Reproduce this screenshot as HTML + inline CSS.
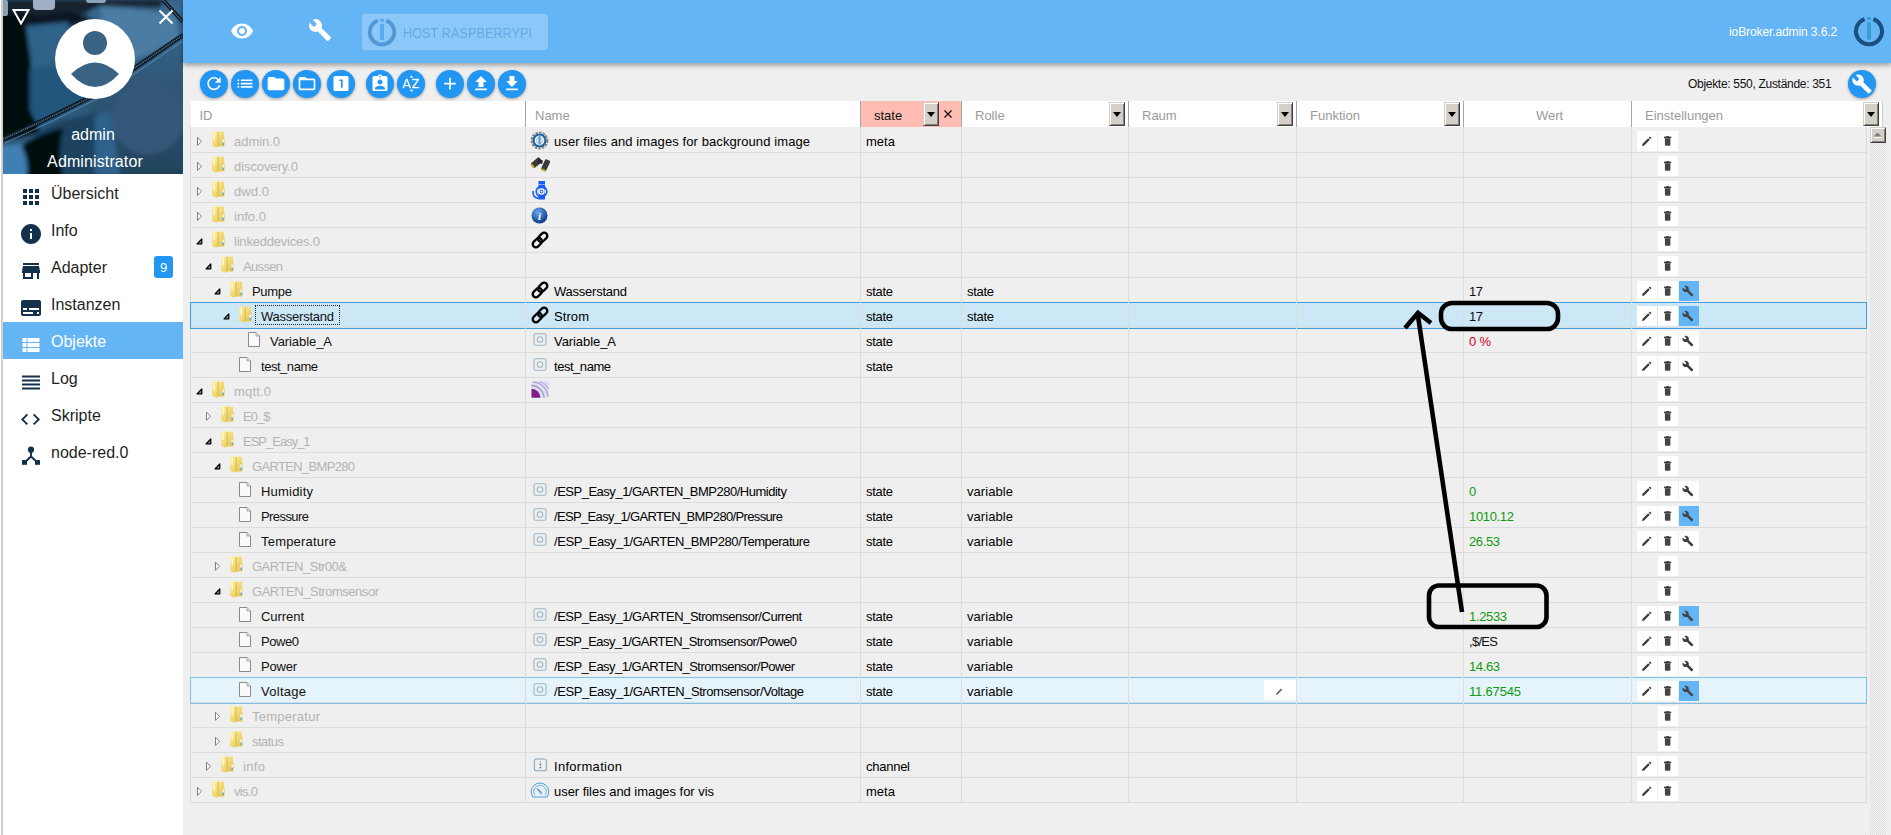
<!DOCTYPE html><html><head><meta charset="utf-8"><style>
*{box-sizing:border-box}
html,body{margin:0;padding:0}
body{width:1891px;height:835px;overflow:hidden;background:#efefef;font-family:"Liberation Sans",sans-serif;position:relative;color:#000}
.a{position:absolute}
.t{position:absolute;white-space:nowrap;font-size:13px;line-height:16px;margin-top:1px}
.mi{position:absolute;left:51px;font-size:16px;line-height:20px;color:#1f1f1f;white-space:nowrap}
.fab{position:absolute;width:28px;height:28px;border-radius:50%;background:#2196f3;box-shadow:0 1px 3px rgba(0,0,0,.35)}
.fab svg{position:absolute;left:0;top:0}
.hl{position:absolute;top:101px;height:26px;width:1px;background:#a6a6a6}
.ht{position:absolute;top:108px;font-size:13px;line-height:16px;color:#9a9a9a;white-space:nowrap}
.dd{position:absolute;top:102px;width:16px;height:24px;background:#d4d0c8;border-top:1px solid #d4d0c8;border-left:1px solid #d4d0c8;border-right:1px solid #404040;border-bottom:1px solid #404040;box-shadow:inset 1px 1px #fff,inset -1px -1px #808080}
.dd:after{content:"";position:absolute;left:2.5px;top:9px;border-left:4.5px solid transparent;border-right:4.5px solid transparent;border-top:5px solid #000}
.rl{position:absolute;left:191px;width:1675px;height:1px;background:#dcdcdc}
.vl{position:absolute;top:127px;width:1px;height:675px;background:#dcdcdc}
.btn{position:absolute;width:20px;height:20px;background:#fff}
.btn svg{position:absolute;left:0;top:0}
.g{color:#aaa}
</style></head><body>
<div class="a" style="left:0;top:0;width:183px;height:835px;background:#fff"></div>
<div class="a" style="left:1px;top:0;width:2px;height:835px;background:#d4d0c8"></div>
<svg class="a" style="left:3px;top:0" width="180" height="174" viewBox="3 0 180 174">
<defs>
<filter id="bl" x="-10%" y="-10%" width="120%" height="120%"><feGaussianBlur stdDeviation="2.2"/></filter>
<filter id="bl2" x="-10%" y="-10%" width="120%" height="120%"><feGaussianBlur stdDeviation="0.6"/></filter>
<linearGradient id="hbr" x1="0" y1="0" x2="0" y2="1"><stop offset="0" stop-color="#3b6a90"/><stop offset="1" stop-color="#22425c"/></linearGradient>
</defs>
<rect x="0" y="0" width="190" height="180" fill="#305a7c"/>
<g filter="url(#bl)">
<rect x="90" y="0" width="100" height="180" fill="url(#hbr)"/>
<path d="M100 5 L175 15 L180 40 L130 62 L105 40Z" fill="#4b7ca3"/>
<circle cx="148" cy="118" r="36" fill="#34597a"/>
<path d="M90 175 L90 120 L110 110 L120 175Z" fill="#2d628c"/>
<path d="M0 0 L165 0 L160 8 L100 6 L60 24 L0 22Z" fill="#13212f"/>
<path d="M0 12 L58 18 L38 30 L30 70 L32 105 L40 132 L0 142Z" fill="#02070c"/>
<path d="M20 18 L70 12 L95 20 L60 28 L25 30Z" fill="#0a1420"/>
<path d="M26 26 L68 22 L70 62 L32 68Z" fill="#2f6289"/>
<path d="M30 70 L70 62 L95 80 L95 95 L40 130 L30 110Z" fill="#24577d"/>
<path d="M35 135 Q55 120 75 118 L95 112 L95 180 L60 180 Q50 150 35 140Z" fill="#1c4361"/>
<path d="M22 146 Q42 132 64 128 Q56 150 64 180 L24 180Z" fill="#030a10"/>
<path d="M0 146 L20 144 Q30 160 26 180 L0 180Z" fill="#3f7fb3"/>
</g>
<g filter="url(#bl2)">
<rect x="33" y="-4" width="22" height="14" rx="4" fill="#9fb0c4"/>
<rect x="86" y="-6" width="20" height="9" rx="3" fill="#8fa3b8"/>
<rect x="0" y="0" width="8" height="16" rx="2" fill="#8aa0b6"/>
</g>
<path d="M3 139 Q50 118 95 95 L183 35" fill="none" stroke="#0b1a26" stroke-width="4.5"/>
<path d="M3 139 Q50 118 95 95 L183 35" fill="none" stroke="#5f7f98" stroke-width="1.6" stroke-dasharray="1 1"/>
<path d="M5 143 Q50 123 97 99 L183 41" fill="none" stroke="#6f9dc4" stroke-width="1" opacity="0.7"/>
<path d="M163 0 L183 22" fill="none" stroke="#0d1b28" stroke-width="4"/>
<path d="M163 0 L183 22" fill="none" stroke="#5f7f98" stroke-width="1.4" stroke-dasharray="1 1"/>
</svg>
<svg class="a" style="left:11px;top:8px" width="20" height="18"><path d="M2.5 2 H17.5 L10 15.5Z" fill="none" stroke="#fff" stroke-width="2" stroke-linejoin="miter"/></svg>
<svg class="a" style="left:157px;top:8px" width="18" height="18"><path d="M2.5 2.5 L15.5 15.5 M15.5 2.5 L2.5 15.5" stroke="#fff" stroke-width="2"/></svg>
<svg class="a" style="left:55px;top:19px" width="80" height="80" viewBox="0 0 80 80">
<circle cx="40" cy="40" r="40" fill="#fff"/>
<circle cx="40" cy="24" r="12" fill="#3a6283"/>
<path d="M16 55 Q40 32 64 55 Q40 81 16 55Z" fill="#3a6283"/>
</svg>
<div class="a" style="left:3px;top:125px;width:180px;text-align:center;color:#fff;font-size:16px;line-height:20px">admin</div>
<div class="a" style="left:5px;top:152px;width:180px;text-align:center;color:#fff;font-size:16px;line-height:20px;letter-spacing:0.12px">Administrator</div>
<div class="mi" style="top:184px;color:#1f1f1f">Übersicht</div>
<div class="mi" style="top:221px;color:#1f1f1f">Info</div>
<div class="mi" style="top:258px;color:#1f1f1f">Adapter</div>
<div class="mi" style="top:295px;color:#1f1f1f">Instanzen</div>
<div class="a" style="left:3px;top:322px;width:180px;height:37px;background:#64b5f6"></div>
<div class="mi" style="top:332px;color:#fff">Objekte</div>
<div class="mi" style="top:369px;color:#1f1f1f">Log</div>
<div class="mi" style="top:406px;color:#1f1f1f">Skripte</div>
<div class="mi" style="top:443px;color:#1f1f1f">node-red.0</div>
<svg class="a" style="left:0;top:0" width="60" height="480"><g transform="translate(19 185) scale(1)"><path fill="#13304c" d="M4 8h4V4H4v4zm6 12h4v-4h-4v4zm-6 0h4v-4H4v4zm0-6h4v-4H4v4zm6 0h4v-4h-4v4zm6-10v4h4V4h-4zm-6 4h4V4h-4v4zm6 6h4v-4h-4v4zm0 6h4v-4h-4v4z"/></g><g transform="translate(19 222) scale(1)"><path fill="#13304c" d="M12 2C6.48 2 2 6.48 2 12s4.48 10 10 10 10-4.48 10-10S17.52 2 12 2zm1 15h-2v-6h2v6zm0-8h-2V7h2v2z"/></g><g transform="translate(19 259) scale(1)"><path fill="#13304c" d="M20 4H4v2h16V4zm1 10v-2l-1-5H4l-1 5v2h1v6h10v-6h4v6h2v-6h1zm-9 4H6v-4h6v4z"/></g><g transform="translate(19 296) scale(1)"><path fill="#13304c" d="M20 4H4c-1.1 0-2 .9-2 2v12c0 1.1.9 2 2 2h16c1.1 0 2-.9 2-2V6c0-1.1-.9-2-2-2zM4 12h4v2H4v-2zm10 6H4v-2h10v2zm6 0h-2v-2h2v2zm0-4H10v-2h10v2z"/></g><g transform="translate(18.5 333) scale(1)"><path fill="#fff" d="M4 14h4v-4H4v4zm0 5h4v-4H4v4zM4 9h4V5H4v4zm5 5h12v-4H9v4zm0 5h12v-4H9v4zM9 5v4h12V5H9z"/></g><g transform="translate(19 370.5) scale(1)"><path fill="#13304c" d="M3 15h18v-2H3v2zm0 4h18v-2H3v2zm0-8h18V9H3v2zm0-6v2h18V5H3z"/></g><g transform="translate(19.1 408) scale(0.95)"><path fill="#13304c" d="M9.4 16.6L4.8 12l4.6-4.6L8 6l-6 6 6 6 1.4-1.4zm5.2 0l4.6-4.6-4.6-4.6L16 6l6 6-6 6-1.4-1.4z"/></g><circle cx="31" cy="449.7" r="3.1" fill="#13304c"/><path d="M31 451 L31 456.5 L25 462 M31 456.5 L37 462" fill="none" stroke="#13304c" stroke-width="1.9"/><rect x="22" y="460" width="5" height="4.8" fill="#13304c"/><rect x="35" y="460" width="5" height="4.8" fill="#13304c"/></svg>
<div class="a" style="left:154px;top:256px;width:19px;height:22px;border-radius:3px;background:#2196f3;color:#fff;font-size:13px;line-height:24px;text-align:center">9</div>
<div class="a" style="left:183px;top:0;width:1708px;height:63px;background:#64b5f6;box-shadow:0 2px 5px rgba(0,0,0,.38)"></div>
<svg class="a" style="left:230px;top:19px" width="24" height="24" viewBox="0 0 24 24"><path fill="#fff" d="M12 4.5C7 4.5 2.73 7.61 1 12c1.73 4.39 6 7.5 11 7.5s9.27-3.11 11-7.5c-1.73-4.39-6-7.5-11-7.5zM12 17c-2.76 0-5-2.24-5-5s2.24-5 5-5 5 2.24 5 5-2.24 5-5 5zm0-8c-1.66 0-3 1.34-3 3s1.34 3 3 3 3-1.34 3-3-1.34-3-3-3z"/></svg>
<svg class="a" style="left:307.5px;top:18px" width="24" height="24" viewBox="0 0 24 24"><path fill="#fff" d="M22.7 19l-9.1-9.1c.9-2.3.4-5-1.5-6.9-2-2-5-2.4-7.4-1.3L9 6 6 9 1.6 4.7C.4 7.1.9 10.1 2.9 12.1c1.9 1.9 4.6 2.4 6.9 1.5l9.1 9.1c.4.4 1 .4 1.4 0l2.3-2.3c.5-.4.5-1.1.1-1.4z"/></svg>
<div class="a" style="left:362px;top:14px;width:186px;height:36px;border-radius:3px;background:rgba(255,255,255,.25)"></div>
<svg class="a" style="left:0;top:0" width="1891" height="60"><path d="M386.20 20.69 A12.25 12.25 0 1 1 377.80 20.69" fill="none" stroke="#5298d6" stroke-width="3.9"/><rect x="380.0" y="24.1" width="4" height="15.799999999999997" fill="#5aacec"/><rect x="380.0" y="18.7" width="4" height="3.1000000000000014" fill="#5aacec"/></svg>
<div class="a" style="left:402.5px;top:25.2px;font-size:14px;line-height:16px;color:#64abe6;white-space:nowrap;transform:scaleX(0.91);transform-origin:0 0">HOST RASPBERRYPI</div>
<div class="a" style="left:1729px;top:24px;font-size:12px;letter-spacing:-0.1px;line-height:16px;color:#fff;white-space:nowrap">ioBroker.admin 3.6.2</div>
<svg class="a" style="left:0;top:0" width="1891" height="60"><path d="M1873.40 19.07 A13 13 0 1 1 1864.60 19.07" fill="none" stroke="#1a4f80" stroke-width="4"/><rect x="1867.0" y="22.1" width="4" height="17.5" fill="#3a9fd0"/><rect x="1867.0" y="17" width="4" height="3" fill="#3a9fd0"/></svg>
<div class="fab" style="left:200px;top:70px"><svg width="28" height="28"><g transform="translate(4 3.6) scale(0.8333)"><path fill="#fff" d="M17.65 6.35C16.2 4.9 14.21 4 12 4c-4.42 0-7.99 3.58-7.99 8s3.57 8 7.99 8c3.73 0 6.84-2.55 7.73-6h-2.08c-.82 2.33-3.04 4-5.65 4-3.31 0-6-2.69-6-6s2.69-6 6-6c1.66 0 3.14.69 4.22 1.78L13 11h7V4l-2.35 2.35z"/></g></svg></div>
<div class="fab" style="left:231px;top:70px"><svg width="28" height="28"><g transform="translate(4 3.6) scale(0.8333)"><path fill="#fff" d="M3 13h2v-2H3v2zm0 4h2v-2H3v2zm0-8h2V7H3v2zm4 4h14v-2H7v2zm0 4h14v-2H7v2zM7 7v2h14V7H7z"/></g></svg></div>
<div class="fab" style="left:262px;top:70px"><svg width="28" height="28"><g transform="translate(4 3.6) scale(0.8333)"><path fill="#fff" d="M10 4H4c-1.1 0-1.99.9-1.99 2L2 18c0 1.1.9 2 2 2h16c1.1 0 2-.9 2-2V8c0-1.1-.9-2-2-2h-8l-2-2z"/></g></svg></div>
<div class="fab" style="left:293px;top:70px"><svg width="28" height="28"><g transform="translate(4 3.6) scale(0.8333)"><path fill="#fff" d="M20 6h-8l-2-2H4c-1.1 0-1.99.9-1.99 2L2 18c0 1.1.9 2 2 2h16c1.1 0 2-.9 2-2V8c0-1.1-.9-2-2-2zm0 12H4V8h16v10z"/></g></svg></div>
<div class="fab" style="left:327px;top:70px"><svg width="28" height="28"><g transform="translate(4 3.6) scale(0.8333)"><path fill="#fff" d="M19 3H5c-1.1 0-2 .9-2 2v14c0 1.1.9 2 2 2h14c1.1 0 2-.9 2-2V5c0-1.1-.9-2-2-2zm-5 14h-2V9h-2V7h4v10z"/></g></svg></div>
<div class="fab" style="left:366px;top:70px"><svg width="28" height="28"><g transform="translate(4 3.6) scale(0.8333)"><path fill="#fff" d="M19 3h-4.18C14.4 1.84 13.3 1 12 1c-1.3 0-2.4.84-2.82 2H5c-1.1 0-2 .9-2 2v14c0 1.1.9 2 2 2h14c1.1 0 2-.9 2-2V5c0-1.1-.9-2-2-2zm-7 0c.55 0 1 .45 1 1s-.45 1-1 1-1-.45-1-1 .45-1 1-1zm0 4c1.66 0 3 1.34 3 3s-1.34 3-3 3-3-1.34-3-3 1.34-3 3-3zm6 12H6v-1.4c0-2 4-3.1 6-3.1s6 1.1 6 3.1V19z"/></g></svg></div>
<div class="fab" style="left:397px;top:70px"><svg width="28" height="28"><g transform="translate(4 3.6) scale(0.8333)"><path fill="#fff" d="M14.94 4.66h-4.72l2.36-2.36zm-4.69 14.71h4.66l-2.33 2.33zM6.1 6.27L1.6 17.73h1.84l.92-2.45h5.11l.92 2.45h1.84L7.74 6.27H6.1zm-1.13 7.37l1.94-5.18 1.94 5.18H4.97zm10.76 2.5h6.12v1.59h-8.53v-1.29l5.92-8.56h-5.88v-1.6h8.3v1.26l-5.93 8.6z"/></g></svg></div>
<div class="fab" style="left:436px;top:70px"><svg width="28" height="28"><g transform="translate(4 3.6) scale(0.8333)"><path fill="#fff" d="M19 13h-6v6h-2v-6H5v-2h6V5h2v6h6v2z"/></g></svg></div>
<div class="fab" style="left:467px;top:70px"><svg width="28" height="28"><g transform="translate(4 3.6) scale(0.8333)"><path fill="#fff" d="M9 16h6v-6h4l-7-7-7 7h4zm-4 2h14v2H5z"/></g></svg></div>
<div class="fab" style="left:498px;top:70px"><svg width="28" height="28"><g transform="translate(4 3.6) scale(0.8333)"><path fill="#fff" d="M19 9h-4V3H9v6H5l7 7 7-7zM5 18v2h14v-2H5z"/></g></svg></div>
<div class="a" style="left:1688px;top:76px;font-size:12px;letter-spacing:-0.3px;line-height:16px;color:#111;white-space:nowrap">Objekte: 550, Zustände: 351</div>
<div class="fab" style="left:1848px;top:70px"><svg width="28" height="28" viewBox="-4 -4 32 32"><path fill="#fff" d="M22.7 19l-9.1-9.1c.9-2.3.4-5-1.5-6.9-2-2-5-2.4-7.4-1.3L9 6 6 9 1.6 4.7C.4 7.1.9 10.1 2.9 12.1c1.9 1.9 4.6 2.4 6.9 1.5l9.1 9.1c.4.4 1 .4 1.4 0l2.3-2.3c.5-.4.5-1.1.1-1.4z"/></svg></div>
<div class="a" style="left:191px;top:101px;width:1692px;height:26px;background:#fff"></div>
<div class="a" style="left:861px;top:101px;width:100px;height:26px;background:#ffbcb2"></div>
<div class="hl" style="left:525px"></div>
<div class="hl" style="left:860px"></div>
<div class="hl" style="left:961px"></div>
<div class="hl" style="left:1128px"></div>
<div class="hl" style="left:1296px"></div>
<div class="hl" style="left:1463px"></div>
<div class="hl" style="left:1631px"></div>
<div class="hl" style="left:1882px;background:#d0d0d0"></div>
<div class="ht" style="left:199.5px">ID</div>
<div class="ht" style="left:535px">Name</div>
<div class="ht" style="left:975px">Rolle</div>
<div class="ht" style="left:1142px">Raum</div>
<div class="ht" style="left:1310px">Funktion</div>
<div class="ht" style="left:1645px">Einstellungen</div>
<div class="ht" style="left:1536px">Wert</div>
<div class="ht" style="left:874px;color:#111">state</div>
<div class="dd" style="left:923px"></div>
<div class="dd" style="left:1109px"></div>
<div class="dd" style="left:1277px"></div>
<div class="dd" style="left:1444px"></div>
<div class="dd" style="left:1863px"></div>
<svg class="a" style="left:943px;top:109px" width="10" height="10"><path d="M1.5 1.5 L8.5 8.5 M8.5 1.5 L1.5 8.5" stroke="#111" stroke-width="1.3"/></svg>
<div class="a" style="left:1870px;top:143px;width:16px;height:692px;background-color:#f4f4f4;background-image:repeating-conic-gradient(#d9d9d9 0 25%, #f7f7f7 0 50%);background-size:2px 2px"></div>
<div class="a" style="left:1870px;top:127px;height:16px;width:16px;background:#d4d0c8;border-top:1px solid #d4d0c8;border-left:1px solid #d4d0c8;border-right:1px solid #404040;border-bottom:1px solid #404040;box-shadow:inset 1px 1px #fff,inset -1px -1px #808080"><svg width="13" height="13" style="position:absolute;left:0;top:0"><path d="M2.5 8.5 L6.5 4.5 L10.5 8.5Z" fill="#808080"/><rect x="2.5" y="9" width="8" height="1" fill="#fff"/></svg></div>
<div class="a" style="left:190px;top:127px;width:1px;height:676px;background:#dcdcdc"></div>
<div class="a" style="left:1866px;top:127px;width:1px;height:676px;background:#dcdcdc"></div>
<div class="rl" style="top:152px"></div>
<div class="rl" style="top:177px"></div>
<div class="rl" style="top:202px"></div>
<div class="rl" style="top:227px"></div>
<div class="rl" style="top:252px"></div>
<div class="rl" style="top:277px"></div>
<div class="rl" style="top:302px"></div>
<div class="a" style="left:190px;top:302px;width:1677px;height:27px;background:#cce8f6;border:1px solid #3d9fe0"></div>
<div class="rl" style="top:327px"></div>
<div class="rl" style="top:352px"></div>
<div class="rl" style="top:377px"></div>
<div class="rl" style="top:402px"></div>
<div class="rl" style="top:427px"></div>
<div class="rl" style="top:452px"></div>
<div class="rl" style="top:477px"></div>
<div class="rl" style="top:502px"></div>
<div class="rl" style="top:527px"></div>
<div class="rl" style="top:552px"></div>
<div class="rl" style="top:577px"></div>
<div class="rl" style="top:602px"></div>
<div class="rl" style="top:627px"></div>
<div class="rl" style="top:652px"></div>
<div class="rl" style="top:677px"></div>
<div class="a" style="left:190px;top:677px;width:1677px;height:27px;background:#e5f3fb;border:1px solid #7fc0ea"></div>
<div class="rl" style="top:702px"></div>
<div class="rl" style="top:727px"></div>
<div class="rl" style="top:752px"></div>
<div class="rl" style="top:777px"></div>
<div class="rl" style="top:802px"></div>
<div class="vl" style="left:525px;height:675px"></div>
<div class="vl" style="left:860px;height:675px"></div>
<div class="vl" style="left:961px;height:675px"></div>
<div class="vl" style="left:1128px;height:675px"></div>
<div class="vl" style="left:1296px;height:675px"></div>
<div class="vl" style="left:1463px;height:675px"></div>
<div class="vl" style="left:1631px;height:675px"></div>
<svg class="a" style="left:196px;top:136px" width="8" height="11"><path d="M1.5 1.2 L5.5 5.3 L1.5 9.4Z" fill="#fff" stroke="#808080" stroke-width="1"/></svg>
<svg class="a" style="left:211px;top:131px" width="14" height="17" viewBox="0 0 14 17"><defs><linearGradient id="fg" x1="0" y1="0" x2="1" y2="1"><stop offset="0" stop-color="#fff3a8"/><stop offset="1" stop-color="#e2c04a"/></linearGradient></defs><path d="M1 1.5 Q1 0.5 2 0.5 H12 Q13 0.5 13 1.5 V6 H13.5 V14.5 Q13.5 15.5 12.5 15.5 H7 Q6.5 16.5 5 16.5 Q3.5 16.5 3 15.5 H2 Q1 15.5 1 14.5Z" fill="url(#fg)"/><rect x="6.5" y="1" width="1.3" height="14.5" fill="#d8b440" opacity="0.7"/><rect x="2.5" y="2" width="1.5" height="7" fill="#fffce0" opacity="0.8"/><rect x="11.5" y="8.5" width="1.3" height="5" fill="#fff"/><rect x="11.5" y="11.5" width="1.3" height="2.5" fill="#3aa0d8"/></svg>
<div class="t" style="left:234px;top:133px;color:#b3b3b3;letter-spacing:-0.042px">admin.0</div>
<svg class="a" style="left:530px;top:131px" width="19" height="19" viewBox="0 0 19 19"><circle cx="9.5" cy="9.5" r="8" fill="none" stroke="#888" stroke-width="2" stroke-dasharray="2.5 1.2"/><circle cx="9.5" cy="9.5" r="6" fill="none" stroke="#1d5f9a" stroke-width="2.2"/><circle cx="9.5" cy="9.5" r="3" fill="none" stroke="#bbb" stroke-width="1"/><rect x="8.5" y="3.5" width="2" height="10" fill="#3aa0e0"/></svg>
<div class="t" style="left:554px;top:133px;letter-spacing:0.093px">user files and images for background image</div>
<div class="t" style="left:866px;top:133px;letter-spacing:0.031px">meta</div>
<div class="btn" style="left:1637px;top:131px"><svg width="20" height="20"><path d="M5 15 L5.6 12.8 L11.2 7.2 L12.8 8.8 L7.2 14.4Z" fill="#3c3c3c"/><path d="M11.8 6.6 L12.9 5.5 L14.5 7.1 L13.4 8.2Z" fill="#3c3c3c"/></svg></div>
<div class="btn" style="left:1658px;top:131px"><svg width="20" height="20"><rect x="6" y="5.6" width="7.2" height="1.6" fill="#3c3c3c"/><rect x="8.4" y="5" width="2.4" height="1" fill="#3c3c3c"/><path d="M6.9 7.2 H12.4 V13.8 Q12.4 14.8 11.4 14.8 H7.9 Q6.9 14.8 6.9 13.8Z" fill="#444"/></svg></div>
<svg class="a" style="left:196px;top:161px" width="8" height="11"><path d="M1.5 1.2 L5.5 5.3 L1.5 9.4Z" fill="#fff" stroke="#808080" stroke-width="1"/></svg>
<svg class="a" style="left:211px;top:156px" width="14" height="17" viewBox="0 0 14 17"><defs><linearGradient id="fg" x1="0" y1="0" x2="1" y2="1"><stop offset="0" stop-color="#fff3a8"/><stop offset="1" stop-color="#e2c04a"/></linearGradient></defs><path d="M1 1.5 Q1 0.5 2 0.5 H12 Q13 0.5 13 1.5 V6 H13.5 V14.5 Q13.5 15.5 12.5 15.5 H7 Q6.5 16.5 5 16.5 Q3.5 16.5 3 15.5 H2 Q1 15.5 1 14.5Z" fill="url(#fg)"/><rect x="6.5" y="1" width="1.3" height="14.5" fill="#d8b440" opacity="0.7"/><rect x="2.5" y="2" width="1.5" height="7" fill="#fffce0" opacity="0.8"/><rect x="11.5" y="8.5" width="1.3" height="5" fill="#fff"/><rect x="11.5" y="11.5" width="1.3" height="2.5" fill="#3aa0d8"/></svg>
<div class="t" style="left:234px;top:158px;color:#b3b3b3;letter-spacing:-0.08px">discovery.0</div>
<svg class="a" style="left:530px;top:156px" width="20" height="18" viewBox="0 0 20 18"><g transform="translate(6 7) rotate(-40)"><rect x="-5" y="-3" width="11" height="6" rx="1.5" fill="#3a3a3a"/><rect x="-5.5" y="-2.3" width="2" height="4.6" fill="#c9b020"/></g><g transform="translate(15.5 9.5) rotate(-65)"><rect x="-5.5" y="-2.8" width="11.5" height="5.6" rx="1.5" fill="#3a3a3a"/><rect x="-6" y="-2.2" width="2" height="4.4" fill="#c9b020"/></g><path d="M8 3 L13 4.5 L12 8 L8 7Z" fill="#2a2a2a"/></svg>
<div class="btn" style="left:1658px;top:156px"><svg width="20" height="20"><rect x="6" y="5.6" width="7.2" height="1.6" fill="#3c3c3c"/><rect x="8.4" y="5" width="2.4" height="1" fill="#3c3c3c"/><path d="M6.9 7.2 H12.4 V13.8 Q12.4 14.8 11.4 14.8 H7.9 Q6.9 14.8 6.9 13.8Z" fill="#444"/></svg></div>
<svg class="a" style="left:196px;top:186px" width="8" height="11"><path d="M1.5 1.2 L5.5 5.3 L1.5 9.4Z" fill="#fff" stroke="#808080" stroke-width="1"/></svg>
<svg class="a" style="left:211px;top:181px" width="14" height="17" viewBox="0 0 14 17"><defs><linearGradient id="fg" x1="0" y1="0" x2="1" y2="1"><stop offset="0" stop-color="#fff3a8"/><stop offset="1" stop-color="#e2c04a"/></linearGradient></defs><path d="M1 1.5 Q1 0.5 2 0.5 H12 Q13 0.5 13 1.5 V6 H13.5 V14.5 Q13.5 15.5 12.5 15.5 H7 Q6.5 16.5 5 16.5 Q3.5 16.5 3 15.5 H2 Q1 15.5 1 14.5Z" fill="url(#fg)"/><rect x="6.5" y="1" width="1.3" height="14.5" fill="#d8b440" opacity="0.7"/><rect x="2.5" y="2" width="1.5" height="7" fill="#fffce0" opacity="0.8"/><rect x="11.5" y="8.5" width="1.3" height="5" fill="#fff"/><rect x="11.5" y="11.5" width="1.3" height="2.5" fill="#3aa0d8"/></svg>
<div class="t" style="left:234px;top:183px;color:#b3b3b3;letter-spacing:0.074px">dwd.0</div>
<svg class="a" style="left:531px;top:180px" width="18" height="20" viewBox="0 0 18 20"><rect x="7.5" y="1" width="6.5" height="3" fill="#1a5cf5"/><rect x="7.5" y="4.5" width="6.5" height="15" fill="#1a5cf5"/><circle cx="10.5" cy="11.5" r="5.3" fill="none" stroke="#1a5cf5" stroke-width="1.6"/><circle cx="10.5" cy="11.5" r="2.6" fill="none" stroke="#fff" stroke-width="1.3"/><circle cx="10.5" cy="11.5" r="1" fill="#fff"/><path d="M2 11 Q1.5 18 8 18.5" fill="none" stroke="#1a5cf5" stroke-width="1.6"/></svg>
<div class="btn" style="left:1658px;top:181px"><svg width="20" height="20"><rect x="6" y="5.6" width="7.2" height="1.6" fill="#3c3c3c"/><rect x="8.4" y="5" width="2.4" height="1" fill="#3c3c3c"/><path d="M6.9 7.2 H12.4 V13.8 Q12.4 14.8 11.4 14.8 H7.9 Q6.9 14.8 6.9 13.8Z" fill="#444"/></svg></div>
<svg class="a" style="left:196px;top:211px" width="8" height="11"><path d="M1.5 1.2 L5.5 5.3 L1.5 9.4Z" fill="#fff" stroke="#808080" stroke-width="1"/></svg>
<svg class="a" style="left:211px;top:206px" width="14" height="17" viewBox="0 0 14 17"><defs><linearGradient id="fg" x1="0" y1="0" x2="1" y2="1"><stop offset="0" stop-color="#fff3a8"/><stop offset="1" stop-color="#e2c04a"/></linearGradient></defs><path d="M1 1.5 Q1 0.5 2 0.5 H12 Q13 0.5 13 1.5 V6 H13.5 V14.5 Q13.5 15.5 12.5 15.5 H7 Q6.5 16.5 5 16.5 Q3.5 16.5 3 15.5 H2 Q1 15.5 1 14.5Z" fill="url(#fg)"/><rect x="6.5" y="1" width="1.3" height="14.5" fill="#d8b440" opacity="0.7"/><rect x="2.5" y="2" width="1.5" height="7" fill="#fffce0" opacity="0.8"/><rect x="11.5" y="8.5" width="1.3" height="5" fill="#fff"/><rect x="11.5" y="11.5" width="1.3" height="2.5" fill="#3aa0d8"/></svg>
<div class="t" style="left:234px;top:208px;color:#b3b3b3;letter-spacing:0.037px">info.0</div>
<svg class="a" style="left:531px;top:207px" width="17" height="17" viewBox="0 0 17 17"><defs><radialGradient id="ig" cx="0.4" cy="0.3" r="0.7"><stop offset="0" stop-color="#6aa9f0"/><stop offset="1" stop-color="#0b3a8a"/></radialGradient></defs><circle cx="8.5" cy="8.5" r="8" fill="url(#ig)"/><text x="8.5" y="13" font-family="Liberation Serif" font-style="italic" font-weight="bold" font-size="11" fill="#fff" text-anchor="middle">i</text></svg>
<div class="btn" style="left:1658px;top:206px"><svg width="20" height="20"><rect x="6" y="5.6" width="7.2" height="1.6" fill="#3c3c3c"/><rect x="8.4" y="5" width="2.4" height="1" fill="#3c3c3c"/><path d="M6.9 7.2 H12.4 V13.8 Q12.4 14.8 11.4 14.8 H7.9 Q6.9 14.8 6.9 13.8Z" fill="#444"/></svg></div>
<svg class="a" style="left:196px;top:238px" width="8" height="8"><path d="M5.8 1 L5.8 5.8 L1 5.8Z" fill="#888" stroke="#000" stroke-width="1.2" stroke-linejoin="round"/></svg>
<svg class="a" style="left:211px;top:231px" width="14" height="17" viewBox="0 0 14 17"><defs><linearGradient id="fg" x1="0" y1="0" x2="1" y2="1"><stop offset="0" stop-color="#fff3a8"/><stop offset="1" stop-color="#e2c04a"/></linearGradient></defs><path d="M1 1.5 Q1 0.5 2 0.5 H12 Q13 0.5 13 1.5 V6 H13.5 V14.5 Q13.5 15.5 12.5 15.5 H7 Q6.5 16.5 5 16.5 Q3.5 16.5 3 15.5 H2 Q1 15.5 1 14.5Z" fill="url(#fg)"/><rect x="6.5" y="1" width="1.3" height="14.5" fill="#d8b440" opacity="0.7"/><rect x="2.5" y="2" width="1.5" height="7" fill="#fffce0" opacity="0.8"/><rect x="11.5" y="8.5" width="1.3" height="5" fill="#fff"/><rect x="11.5" y="11.5" width="1.3" height="2.5" fill="#3aa0d8"/></svg>
<div class="t" style="left:234px;top:233px;color:#b3b3b3;letter-spacing:-0.206px">linkeddevices.0</div>
<svg class="a" style="left:529px;top:229px" width="22" height="22" viewBox="0 0 22 22"><g transform="translate(11 11) rotate(-45)"><rect x="-9" y="-3.2" width="10.5" height="6.4" rx="3.2" fill="none" stroke="#000" stroke-width="2.3"/><rect x="-1.5" y="-3.2" width="10.5" height="6.4" rx="3.2" fill="none" stroke="#000" stroke-width="2.3"/></g></svg>
<div class="btn" style="left:1658px;top:231px"><svg width="20" height="20"><rect x="6" y="5.6" width="7.2" height="1.6" fill="#3c3c3c"/><rect x="8.4" y="5" width="2.4" height="1" fill="#3c3c3c"/><path d="M6.9 7.2 H12.4 V13.8 Q12.4 14.8 11.4 14.8 H7.9 Q6.9 14.8 6.9 13.8Z" fill="#444"/></svg></div>
<svg class="a" style="left:205px;top:263px" width="8" height="8"><path d="M5.8 1 L5.8 5.8 L1 5.8Z" fill="#888" stroke="#000" stroke-width="1.2" stroke-linejoin="round"/></svg>
<svg class="a" style="left:220px;top:256px" width="14" height="17" viewBox="0 0 14 17"><defs><linearGradient id="fg" x1="0" y1="0" x2="1" y2="1"><stop offset="0" stop-color="#fff3a8"/><stop offset="1" stop-color="#e2c04a"/></linearGradient></defs><path d="M1 1.5 Q1 0.5 2 0.5 H12 Q13 0.5 13 1.5 V6 H13.5 V14.5 Q13.5 15.5 12.5 15.5 H7 Q6.5 16.5 5 16.5 Q3.5 16.5 3 15.5 H2 Q1 15.5 1 14.5Z" fill="url(#fg)"/><rect x="6.5" y="1" width="1.3" height="14.5" fill="#d8b440" opacity="0.7"/><rect x="2.5" y="2" width="1.5" height="7" fill="#fffce0" opacity="0.8"/><rect x="11.5" y="8.5" width="1.3" height="5" fill="#fff"/><rect x="11.5" y="11.5" width="1.3" height="2.5" fill="#3aa0d8"/></svg>
<div class="t" style="left:243px;top:258px;color:#b3b3b3;letter-spacing:-0.675px">Aussen</div>
<div class="btn" style="left:1658px;top:256px"><svg width="20" height="20"><rect x="6" y="5.6" width="7.2" height="1.6" fill="#3c3c3c"/><rect x="8.4" y="5" width="2.4" height="1" fill="#3c3c3c"/><path d="M6.9 7.2 H12.4 V13.8 Q12.4 14.8 11.4 14.8 H7.9 Q6.9 14.8 6.9 13.8Z" fill="#444"/></svg></div>
<svg class="a" style="left:214px;top:288px" width="8" height="8"><path d="M5.8 1 L5.8 5.8 L1 5.8Z" fill="#888" stroke="#000" stroke-width="1.2" stroke-linejoin="round"/></svg>
<svg class="a" style="left:229px;top:281px" width="14" height="17" viewBox="0 0 14 17"><defs><linearGradient id="fg" x1="0" y1="0" x2="1" y2="1"><stop offset="0" stop-color="#fff3a8"/><stop offset="1" stop-color="#e2c04a"/></linearGradient></defs><path d="M1 1.5 Q1 0.5 2 0.5 H12 Q13 0.5 13 1.5 V6 H13.5 V14.5 Q13.5 15.5 12.5 15.5 H7 Q6.5 16.5 5 16.5 Q3.5 16.5 3 15.5 H2 Q1 15.5 1 14.5Z" fill="url(#fg)"/><rect x="6.5" y="1" width="1.3" height="14.5" fill="#d8b440" opacity="0.7"/><rect x="2.5" y="2" width="1.5" height="7" fill="#fffce0" opacity="0.8"/><rect x="11.5" y="8.5" width="1.3" height="5" fill="#fff"/><rect x="11.5" y="11.5" width="1.3" height="2.5" fill="#3aa0d8"/></svg>
<div class="t" style="left:252px;top:283px;color:#111;letter-spacing:-0.301px">Pumpe</div>
<svg class="a" style="left:529px;top:279px" width="22" height="22" viewBox="0 0 22 22"><g transform="translate(11 11) rotate(-45)"><rect x="-9" y="-3.2" width="10.5" height="6.4" rx="3.2" fill="none" stroke="#000" stroke-width="2.3"/><rect x="-1.5" y="-3.2" width="10.5" height="6.4" rx="3.2" fill="none" stroke="#000" stroke-width="2.3"/></g></svg>
<div class="t" style="left:554px;top:283px;letter-spacing:-0.239px">Wasserstand</div>
<div class="t" style="left:866px;top:283px;letter-spacing:-0.297px">state</div>
<div class="t" style="left:967px;top:283px;letter-spacing:-0.297px">state</div>
<div class="t" style="left:1469px;top:283px;color:#111;letter-spacing:-0.469px">17</div>
<div class="btn" style="left:1637px;top:281px"><svg width="20" height="20"><path d="M5 15 L5.6 12.8 L11.2 7.2 L12.8 8.8 L7.2 14.4Z" fill="#3c3c3c"/><path d="M11.8 6.6 L12.9 5.5 L14.5 7.1 L13.4 8.2Z" fill="#3c3c3c"/></svg></div>
<div class="btn" style="left:1658px;top:281px"><svg width="20" height="20"><rect x="6" y="5.6" width="7.2" height="1.6" fill="#3c3c3c"/><rect x="8.4" y="5" width="2.4" height="1" fill="#3c3c3c"/><path d="M6.9 7.2 H12.4 V13.8 Q12.4 14.8 11.4 14.8 H7.9 Q6.9 14.8 6.9 13.8Z" fill="#444"/></svg></div>
<div class="btn" style="left:1679px;top:281px;background:#64b5f6"><svg width="20" height="20"><g transform="translate(3 4.2) scale(0.49)"><path fill="#444" d="M22.7 19l-9.1-9.1c.9-2.3.4-5-1.5-6.9-2-2-5-2.4-7.4-1.3L9 6 6 9 1.6 4.7C.4 7.1.9 10.1 2.9 12.1c1.9 1.9 4.6 2.4 6.9 1.5l9.1 9.1c.4.4 1 .4 1.4 0l2.3-2.3c.5-.4.5-1.1.1-1.4z"/></g></svg></div>
<svg class="a" style="left:223px;top:313px" width="8" height="8"><path d="M5.8 1 L5.8 5.8 L1 5.8Z" fill="#888" stroke="#000" stroke-width="1.2" stroke-linejoin="round"/></svg>
<svg class="a" style="left:238px;top:306px" width="14" height="17" viewBox="0 0 14 17"><defs><linearGradient id="fg" x1="0" y1="0" x2="1" y2="1"><stop offset="0" stop-color="#fff3a8"/><stop offset="1" stop-color="#e2c04a"/></linearGradient></defs><path d="M1 1.5 Q1 0.5 2 0.5 H12 Q13 0.5 13 1.5 V6 H13.5 V14.5 Q13.5 15.5 12.5 15.5 H7 Q6.5 16.5 5 16.5 Q3.5 16.5 3 15.5 H2 Q1 15.5 1 14.5Z" fill="url(#fg)"/><rect x="6.5" y="1" width="1.3" height="14.5" fill="#d8b440" opacity="0.7"/><rect x="2.5" y="2" width="1.5" height="7" fill="#fffce0" opacity="0.8"/><rect x="11.5" y="8.5" width="1.3" height="5" fill="#fff"/><rect x="11.5" y="11.5" width="1.3" height="2.5" fill="#3aa0d8"/></svg>
<div class="t" style="left:261px;top:308px;color:#111;letter-spacing:-0.239px">Wasserstand</div>
<div class="a" style="left:255px;top:305px;width:85px;height:20px;border:1px dotted #222"></div>
<svg class="a" style="left:529px;top:304px" width="22" height="22" viewBox="0 0 22 22"><g transform="translate(11 11) rotate(-45)"><rect x="-9" y="-3.2" width="10.5" height="6.4" rx="3.2" fill="none" stroke="#000" stroke-width="2.3"/><rect x="-1.5" y="-3.2" width="10.5" height="6.4" rx="3.2" fill="none" stroke="#000" stroke-width="2.3"/></g></svg>
<div class="t" style="left:554px;top:308px;letter-spacing:0.082px">Strom</div>
<div class="t" style="left:866px;top:308px;letter-spacing:-0.297px">state</div>
<div class="t" style="left:967px;top:308px;letter-spacing:-0.297px">state</div>
<div class="t" style="left:1469px;top:308px;color:#111;letter-spacing:-0.469px">17</div>
<div class="btn" style="left:1637px;top:306px"><svg width="20" height="20"><path d="M5 15 L5.6 12.8 L11.2 7.2 L12.8 8.8 L7.2 14.4Z" fill="#3c3c3c"/><path d="M11.8 6.6 L12.9 5.5 L14.5 7.1 L13.4 8.2Z" fill="#3c3c3c"/></svg></div>
<div class="btn" style="left:1658px;top:306px"><svg width="20" height="20"><rect x="6" y="5.6" width="7.2" height="1.6" fill="#3c3c3c"/><rect x="8.4" y="5" width="2.4" height="1" fill="#3c3c3c"/><path d="M6.9 7.2 H12.4 V13.8 Q12.4 14.8 11.4 14.8 H7.9 Q6.9 14.8 6.9 13.8Z" fill="#444"/></svg></div>
<div class="btn" style="left:1679px;top:306px;background:#64b5f6"><svg width="20" height="20"><g transform="translate(3 4.2) scale(0.49)"><path fill="#444" d="M22.7 19l-9.1-9.1c.9-2.3.4-5-1.5-6.9-2-2-5-2.4-7.4-1.3L9 6 6 9 1.6 4.7C.4 7.1.9 10.1 2.9 12.1c1.9 1.9 4.6 2.4 6.9 1.5l9.1 9.1c.4.4 1 .4 1.4 0l2.3-2.3c.5-.4.5-1.1.1-1.4z"/></g></svg></div>
<svg class="a" style="left:247px;top:331px" width="14" height="17" viewBox="0 0 14 17"><path d="M1.5 1.5 H9 L12.5 5 V15.5 H1.5Z" fill="#fafafa" stroke="#8a8a8a" stroke-width="1"/><path d="M9 1.5 V5 H12.5" fill="#e0e0e0" stroke="#9a9a9a" stroke-width="0.8"/></svg>
<div class="t" style="left:270px;top:333px;color:#111;letter-spacing:-0.071px">Variable_A</div>
<svg class="a" style="left:533px;top:333px" width="14" height="13" viewBox="0 0 14 13"><rect x="1" y="0.8" width="12" height="11.5" rx="1.5" fill="none" stroke="#9ab6c2" stroke-width="1.1"/><circle cx="7" cy="6.5" r="2.8" fill="none" stroke="#9ab6c2" stroke-width="1.1"/></svg>
<div class="t" style="left:554px;top:333px;letter-spacing:-0.071px">Variable_A</div>
<div class="t" style="left:866px;top:333px;letter-spacing:-0.297px">state</div>
<div class="t" style="left:1469px;top:333px;color:#d0021b;letter-spacing:-0.203px">0 %</div>
<div class="btn" style="left:1637px;top:331px"><svg width="20" height="20"><path d="M5 15 L5.6 12.8 L11.2 7.2 L12.8 8.8 L7.2 14.4Z" fill="#3c3c3c"/><path d="M11.8 6.6 L12.9 5.5 L14.5 7.1 L13.4 8.2Z" fill="#3c3c3c"/></svg></div>
<div class="btn" style="left:1658px;top:331px"><svg width="20" height="20"><rect x="6" y="5.6" width="7.2" height="1.6" fill="#3c3c3c"/><rect x="8.4" y="5" width="2.4" height="1" fill="#3c3c3c"/><path d="M6.9 7.2 H12.4 V13.8 Q12.4 14.8 11.4 14.8 H7.9 Q6.9 14.8 6.9 13.8Z" fill="#444"/></svg></div>
<div class="btn" style="left:1679px;top:331px"><svg width="20" height="20"><g transform="translate(3 4.2) scale(0.49)"><path fill="#3c3c3c" d="M22.7 19l-9.1-9.1c.9-2.3.4-5-1.5-6.9-2-2-5-2.4-7.4-1.3L9 6 6 9 1.6 4.7C.4 7.1.9 10.1 2.9 12.1c1.9 1.9 4.6 2.4 6.9 1.5l9.1 9.1c.4.4 1 .4 1.4 0l2.3-2.3c.5-.4.5-1.1.1-1.4z"/></g></svg></div>
<svg class="a" style="left:238px;top:356px" width="14" height="17" viewBox="0 0 14 17"><path d="M1.5 1.5 H9 L12.5 5 V15.5 H1.5Z" fill="#fafafa" stroke="#8a8a8a" stroke-width="1"/><path d="M9 1.5 V5 H12.5" fill="#e0e0e0" stroke="#9a9a9a" stroke-width="0.8"/></svg>
<div class="t" style="left:261px;top:358px;color:#111;letter-spacing:-0.463px">test_name</div>
<svg class="a" style="left:533px;top:358px" width="14" height="13" viewBox="0 0 14 13"><rect x="1" y="0.8" width="12" height="11.5" rx="1.5" fill="none" stroke="#9ab6c2" stroke-width="1.1"/><circle cx="7" cy="6.5" r="2.8" fill="none" stroke="#9ab6c2" stroke-width="1.1"/></svg>
<div class="t" style="left:554px;top:358px;letter-spacing:-0.463px">test_name</div>
<div class="t" style="left:866px;top:358px;letter-spacing:-0.297px">state</div>
<div class="btn" style="left:1637px;top:356px"><svg width="20" height="20"><path d="M5 15 L5.6 12.8 L11.2 7.2 L12.8 8.8 L7.2 14.4Z" fill="#3c3c3c"/><path d="M11.8 6.6 L12.9 5.5 L14.5 7.1 L13.4 8.2Z" fill="#3c3c3c"/></svg></div>
<div class="btn" style="left:1658px;top:356px"><svg width="20" height="20"><rect x="6" y="5.6" width="7.2" height="1.6" fill="#3c3c3c"/><rect x="8.4" y="5" width="2.4" height="1" fill="#3c3c3c"/><path d="M6.9 7.2 H12.4 V13.8 Q12.4 14.8 11.4 14.8 H7.9 Q6.9 14.8 6.9 13.8Z" fill="#444"/></svg></div>
<div class="btn" style="left:1679px;top:356px"><svg width="20" height="20"><g transform="translate(3 4.2) scale(0.49)"><path fill="#3c3c3c" d="M22.7 19l-9.1-9.1c.9-2.3.4-5-1.5-6.9-2-2-5-2.4-7.4-1.3L9 6 6 9 1.6 4.7C.4 7.1.9 10.1 2.9 12.1c1.9 1.9 4.6 2.4 6.9 1.5l9.1 9.1c.4.4 1 .4 1.4 0l2.3-2.3c.5-.4.5-1.1.1-1.4z"/></g></svg></div>
<svg class="a" style="left:196px;top:388px" width="8" height="8"><path d="M5.8 1 L5.8 5.8 L1 5.8Z" fill="#888" stroke="#000" stroke-width="1.2" stroke-linejoin="round"/></svg>
<svg class="a" style="left:211px;top:381px" width="14" height="17" viewBox="0 0 14 17"><defs><linearGradient id="fg" x1="0" y1="0" x2="1" y2="1"><stop offset="0" stop-color="#fff3a8"/><stop offset="1" stop-color="#e2c04a"/></linearGradient></defs><path d="M1 1.5 Q1 0.5 2 0.5 H12 Q13 0.5 13 1.5 V6 H13.5 V14.5 Q13.5 15.5 12.5 15.5 H7 Q6.5 16.5 5 16.5 Q3.5 16.5 3 15.5 H2 Q1 15.5 1 14.5Z" fill="url(#fg)"/><rect x="6.5" y="1" width="1.3" height="14.5" fill="#d8b440" opacity="0.7"/><rect x="2.5" y="2" width="1.5" height="7" fill="#fffce0" opacity="0.8"/><rect x="11.5" y="8.5" width="1.3" height="5" fill="#fff"/><rect x="11.5" y="11.5" width="1.3" height="2.5" fill="#3aa0d8"/></svg>
<div class="t" style="left:234px;top:383px;color:#b3b3b3;letter-spacing:0.175px">mqtt.0</div>
<svg class="a" style="left:531px;top:381px" width="18" height="18" viewBox="0 0 18 18"><rect x="0.5" y="0" width="17.3" height="16.8" rx="2" fill="#e2def2"/><path d="M0.5 4.5 A13 13 0 0 1 13 16.8" fill="none" stroke="#9a98c8" stroke-width="1.3"/><path d="M2 0.8 A16 16 0 0 1 17 15.5" fill="none" stroke="#a8a6d0" stroke-width="1.3"/><path d="M8.5 0.5 A14 14 0 0 1 17.5 8" fill="none" stroke="#b0aed6" stroke-width="1.1"/><path d="M0.5 7.8 A9 9 0 0 1 9.5 16.8 L0.5 16.8Z" fill="#7d1f85"/></svg>
<div class="btn" style="left:1658px;top:381px"><svg width="20" height="20"><rect x="6" y="5.6" width="7.2" height="1.6" fill="#3c3c3c"/><rect x="8.4" y="5" width="2.4" height="1" fill="#3c3c3c"/><path d="M6.9 7.2 H12.4 V13.8 Q12.4 14.8 11.4 14.8 H7.9 Q6.9 14.8 6.9 13.8Z" fill="#444"/></svg></div>
<svg class="a" style="left:205px;top:411px" width="8" height="11"><path d="M1.5 1.2 L5.5 5.3 L1.5 9.4Z" fill="#fff" stroke="#808080" stroke-width="1"/></svg>
<svg class="a" style="left:220px;top:406px" width="14" height="17" viewBox="0 0 14 17"><defs><linearGradient id="fg" x1="0" y1="0" x2="1" y2="1"><stop offset="0" stop-color="#fff3a8"/><stop offset="1" stop-color="#e2c04a"/></linearGradient></defs><path d="M1 1.5 Q1 0.5 2 0.5 H12 Q13 0.5 13 1.5 V6 H13.5 V14.5 Q13.5 15.5 12.5 15.5 H7 Q6.5 16.5 5 16.5 Q3.5 16.5 3 15.5 H2 Q1 15.5 1 14.5Z" fill="url(#fg)"/><rect x="6.5" y="1" width="1.3" height="14.5" fill="#d8b440" opacity="0.7"/><rect x="2.5" y="2" width="1.5" height="7" fill="#fffce0" opacity="0.8"/><rect x="11.5" y="8.5" width="1.3" height="5" fill="#fff"/><rect x="11.5" y="11.5" width="1.3" height="2.5" fill="#3aa0d8"/></svg>
<div class="t" style="left:243px;top:408px;color:#b3b3b3;letter-spacing:-1.0px">E0_$</div>
<div class="btn" style="left:1658px;top:406px"><svg width="20" height="20"><rect x="6" y="5.6" width="7.2" height="1.6" fill="#3c3c3c"/><rect x="8.4" y="5" width="2.4" height="1" fill="#3c3c3c"/><path d="M6.9 7.2 H12.4 V13.8 Q12.4 14.8 11.4 14.8 H7.9 Q6.9 14.8 6.9 13.8Z" fill="#444"/></svg></div>
<svg class="a" style="left:205px;top:438px" width="8" height="8"><path d="M5.8 1 L5.8 5.8 L1 5.8Z" fill="#888" stroke="#000" stroke-width="1.2" stroke-linejoin="round"/></svg>
<svg class="a" style="left:220px;top:431px" width="14" height="17" viewBox="0 0 14 17"><defs><linearGradient id="fg" x1="0" y1="0" x2="1" y2="1"><stop offset="0" stop-color="#fff3a8"/><stop offset="1" stop-color="#e2c04a"/></linearGradient></defs><path d="M1 1.5 Q1 0.5 2 0.5 H12 Q13 0.5 13 1.5 V6 H13.5 V14.5 Q13.5 15.5 12.5 15.5 H7 Q6.5 16.5 5 16.5 Q3.5 16.5 3 15.5 H2 Q1 15.5 1 14.5Z" fill="url(#fg)"/><rect x="6.5" y="1" width="1.3" height="14.5" fill="#d8b440" opacity="0.7"/><rect x="2.5" y="2" width="1.5" height="7" fill="#fffce0" opacity="0.8"/><rect x="11.5" y="8.5" width="1.3" height="5" fill="#fff"/><rect x="11.5" y="11.5" width="1.3" height="2.5" fill="#3aa0d8"/></svg>
<div class="t" style="left:243px;top:433px;color:#b3b3b3;letter-spacing:-1.0px">ESP_Easy_1</div>
<div class="btn" style="left:1658px;top:431px"><svg width="20" height="20"><rect x="6" y="5.6" width="7.2" height="1.6" fill="#3c3c3c"/><rect x="8.4" y="5" width="2.4" height="1" fill="#3c3c3c"/><path d="M6.9 7.2 H12.4 V13.8 Q12.4 14.8 11.4 14.8 H7.9 Q6.9 14.8 6.9 13.8Z" fill="#444"/></svg></div>
<svg class="a" style="left:214px;top:463px" width="8" height="8"><path d="M5.8 1 L5.8 5.8 L1 5.8Z" fill="#888" stroke="#000" stroke-width="1.2" stroke-linejoin="round"/></svg>
<svg class="a" style="left:229px;top:456px" width="14" height="17" viewBox="0 0 14 17"><defs><linearGradient id="fg" x1="0" y1="0" x2="1" y2="1"><stop offset="0" stop-color="#fff3a8"/><stop offset="1" stop-color="#e2c04a"/></linearGradient></defs><path d="M1 1.5 Q1 0.5 2 0.5 H12 Q13 0.5 13 1.5 V6 H13.5 V14.5 Q13.5 15.5 12.5 15.5 H7 Q6.5 16.5 5 16.5 Q3.5 16.5 3 15.5 H2 Q1 15.5 1 14.5Z" fill="url(#fg)"/><rect x="6.5" y="1" width="1.3" height="14.5" fill="#d8b440" opacity="0.7"/><rect x="2.5" y="2" width="1.5" height="7" fill="#fffce0" opacity="0.8"/><rect x="11.5" y="8.5" width="1.3" height="5" fill="#fff"/><rect x="11.5" y="11.5" width="1.3" height="2.5" fill="#3aa0d8"/></svg>
<div class="t" style="left:252px;top:458px;color:#b3b3b3;letter-spacing:-0.669px">GARTEN_BMP280</div>
<div class="btn" style="left:1658px;top:456px"><svg width="20" height="20"><rect x="6" y="5.6" width="7.2" height="1.6" fill="#3c3c3c"/><rect x="8.4" y="5" width="2.4" height="1" fill="#3c3c3c"/><path d="M6.9 7.2 H12.4 V13.8 Q12.4 14.8 11.4 14.8 H7.9 Q6.9 14.8 6.9 13.8Z" fill="#444"/></svg></div>
<svg class="a" style="left:238px;top:481px" width="14" height="17" viewBox="0 0 14 17"><path d="M1.5 1.5 H9 L12.5 5 V15.5 H1.5Z" fill="#fafafa" stroke="#8a8a8a" stroke-width="1"/><path d="M9 1.5 V5 H12.5" fill="#e0e0e0" stroke="#9a9a9a" stroke-width="0.8"/></svg>
<div class="t" style="left:261px;top:483px;color:#111;letter-spacing:0.203px">Humidity</div>
<svg class="a" style="left:533px;top:483px" width="14" height="13" viewBox="0 0 14 13"><rect x="1" y="0.8" width="12" height="11.5" rx="1.5" fill="none" stroke="#9ab6c2" stroke-width="1.1"/><circle cx="7" cy="6.5" r="2.8" fill="none" stroke="#9ab6c2" stroke-width="1.1"/></svg>
<div class="t" style="left:554px;top:483px;letter-spacing:-0.486px">/ESP_Easy_1/GARTEN_BMP280/Humidity</div>
<div class="t" style="left:866px;top:483px;letter-spacing:-0.297px">state</div>
<div class="t" style="left:967px;top:483px;letter-spacing:0.067px">variable</div>
<div class="t" style="left:1469px;top:483px;color:#0f9a0f;letter-spacing:-0.234px">0</div>
<div class="btn" style="left:1637px;top:481px"><svg width="20" height="20"><path d="M5 15 L5.6 12.8 L11.2 7.2 L12.8 8.8 L7.2 14.4Z" fill="#3c3c3c"/><path d="M11.8 6.6 L12.9 5.5 L14.5 7.1 L13.4 8.2Z" fill="#3c3c3c"/></svg></div>
<div class="btn" style="left:1658px;top:481px"><svg width="20" height="20"><rect x="6" y="5.6" width="7.2" height="1.6" fill="#3c3c3c"/><rect x="8.4" y="5" width="2.4" height="1" fill="#3c3c3c"/><path d="M6.9 7.2 H12.4 V13.8 Q12.4 14.8 11.4 14.8 H7.9 Q6.9 14.8 6.9 13.8Z" fill="#444"/></svg></div>
<div class="btn" style="left:1679px;top:481px"><svg width="20" height="20"><g transform="translate(3 4.2) scale(0.49)"><path fill="#3c3c3c" d="M22.7 19l-9.1-9.1c.9-2.3.4-5-1.5-6.9-2-2-5-2.4-7.4-1.3L9 6 6 9 1.6 4.7C.4 7.1.9 10.1 2.9 12.1c1.9 1.9 4.6 2.4 6.9 1.5l9.1 9.1c.4.4 1 .4 1.4 0l2.3-2.3c.5-.4.5-1.1.1-1.4z"/></g></svg></div>
<svg class="a" style="left:238px;top:506px" width="14" height="17" viewBox="0 0 14 17"><path d="M1.5 1.5 H9 L12.5 5 V15.5 H1.5Z" fill="#fafafa" stroke="#8a8a8a" stroke-width="1"/><path d="M9 1.5 V5 H12.5" fill="#e0e0e0" stroke="#9a9a9a" stroke-width="0.8"/></svg>
<div class="t" style="left:261px;top:508px;color:#111;letter-spacing:-0.576px">Pressure</div>
<svg class="a" style="left:533px;top:508px" width="14" height="13" viewBox="0 0 14 13"><rect x="1" y="0.8" width="12" height="11.5" rx="1.5" fill="none" stroke="#9ab6c2" stroke-width="1.1"/><circle cx="7" cy="6.5" r="2.8" fill="none" stroke="#9ab6c2" stroke-width="1.1"/></svg>
<div class="t" style="left:554px;top:508px;letter-spacing:-0.652px">/ESP_Easy_1/GARTEN_BMP280/Pressure</div>
<div class="t" style="left:866px;top:508px;letter-spacing:-0.297px">state</div>
<div class="t" style="left:967px;top:508px;letter-spacing:0.067px">variable</div>
<div class="t" style="left:1469px;top:508px;color:#0f9a0f;letter-spacing:-0.333px">1010.12</div>
<div class="btn" style="left:1637px;top:506px"><svg width="20" height="20"><path d="M5 15 L5.6 12.8 L11.2 7.2 L12.8 8.8 L7.2 14.4Z" fill="#3c3c3c"/><path d="M11.8 6.6 L12.9 5.5 L14.5 7.1 L13.4 8.2Z" fill="#3c3c3c"/></svg></div>
<div class="btn" style="left:1658px;top:506px"><svg width="20" height="20"><rect x="6" y="5.6" width="7.2" height="1.6" fill="#3c3c3c"/><rect x="8.4" y="5" width="2.4" height="1" fill="#3c3c3c"/><path d="M6.9 7.2 H12.4 V13.8 Q12.4 14.8 11.4 14.8 H7.9 Q6.9 14.8 6.9 13.8Z" fill="#444"/></svg></div>
<div class="btn" style="left:1679px;top:506px;background:#64b5f6"><svg width="20" height="20"><g transform="translate(3 4.2) scale(0.49)"><path fill="#444" d="M22.7 19l-9.1-9.1c.9-2.3.4-5-1.5-6.9-2-2-5-2.4-7.4-1.3L9 6 6 9 1.6 4.7C.4 7.1.9 10.1 2.9 12.1c1.9 1.9 4.6 2.4 6.9 1.5l9.1 9.1c.4.4 1 .4 1.4 0l2.3-2.3c.5-.4.5-1.1.1-1.4z"/></g></svg></div>
<svg class="a" style="left:238px;top:531px" width="14" height="17" viewBox="0 0 14 17"><path d="M1.5 1.5 H9 L12.5 5 V15.5 H1.5Z" fill="#fafafa" stroke="#8a8a8a" stroke-width="1"/><path d="M9 1.5 V5 H12.5" fill="#e0e0e0" stroke="#9a9a9a" stroke-width="0.8"/></svg>
<div class="t" style="left:261px;top:533px;color:#111;letter-spacing:0.202px">Temperature</div>
<svg class="a" style="left:533px;top:533px" width="14" height="13" viewBox="0 0 14 13"><rect x="1" y="0.8" width="12" height="11.5" rx="1.5" fill="none" stroke="#9ab6c2" stroke-width="1.1"/><circle cx="7" cy="6.5" r="2.8" fill="none" stroke="#9ab6c2" stroke-width="1.1"/></svg>
<div class="t" style="left:554px;top:533px;letter-spacing:-0.429px">/ESP_Easy_1/GARTEN_BMP280/Temperature</div>
<div class="t" style="left:866px;top:533px;letter-spacing:-0.297px">state</div>
<div class="t" style="left:967px;top:533px;letter-spacing:0.067px">variable</div>
<div class="t" style="left:1469px;top:533px;color:#0f9a0f;letter-spacing:-0.387px">26.53</div>
<div class="btn" style="left:1637px;top:531px"><svg width="20" height="20"><path d="M5 15 L5.6 12.8 L11.2 7.2 L12.8 8.8 L7.2 14.4Z" fill="#3c3c3c"/><path d="M11.8 6.6 L12.9 5.5 L14.5 7.1 L13.4 8.2Z" fill="#3c3c3c"/></svg></div>
<div class="btn" style="left:1658px;top:531px"><svg width="20" height="20"><rect x="6" y="5.6" width="7.2" height="1.6" fill="#3c3c3c"/><rect x="8.4" y="5" width="2.4" height="1" fill="#3c3c3c"/><path d="M6.9 7.2 H12.4 V13.8 Q12.4 14.8 11.4 14.8 H7.9 Q6.9 14.8 6.9 13.8Z" fill="#444"/></svg></div>
<div class="btn" style="left:1679px;top:531px"><svg width="20" height="20"><g transform="translate(3 4.2) scale(0.49)"><path fill="#3c3c3c" d="M22.7 19l-9.1-9.1c.9-2.3.4-5-1.5-6.9-2-2-5-2.4-7.4-1.3L9 6 6 9 1.6 4.7C.4 7.1.9 10.1 2.9 12.1c1.9 1.9 4.6 2.4 6.9 1.5l9.1 9.1c.4.4 1 .4 1.4 0l2.3-2.3c.5-.4.5-1.1.1-1.4z"/></g></svg></div>
<svg class="a" style="left:214px;top:561px" width="8" height="11"><path d="M1.5 1.2 L5.5 5.3 L1.5 9.4Z" fill="#fff" stroke="#808080" stroke-width="1"/></svg>
<svg class="a" style="left:229px;top:556px" width="14" height="17" viewBox="0 0 14 17"><defs><linearGradient id="fg" x1="0" y1="0" x2="1" y2="1"><stop offset="0" stop-color="#fff3a8"/><stop offset="1" stop-color="#e2c04a"/></linearGradient></defs><path d="M1 1.5 Q1 0.5 2 0.5 H12 Q13 0.5 13 1.5 V6 H13.5 V14.5 Q13.5 15.5 12.5 15.5 H7 Q6.5 16.5 5 16.5 Q3.5 16.5 3 15.5 H2 Q1 15.5 1 14.5Z" fill="url(#fg)"/><rect x="6.5" y="1" width="1.3" height="14.5" fill="#d8b440" opacity="0.7"/><rect x="2.5" y="2" width="1.5" height="7" fill="#fffce0" opacity="0.8"/><rect x="11.5" y="8.5" width="1.3" height="5" fill="#fff"/><rect x="11.5" y="11.5" width="1.3" height="2.5" fill="#3aa0d8"/></svg>
<div class="t" style="left:252px;top:558px;color:#b3b3b3;letter-spacing:-0.493px">GARTEN_Str00&amp;</div>
<div class="btn" style="left:1658px;top:556px"><svg width="20" height="20"><rect x="6" y="5.6" width="7.2" height="1.6" fill="#3c3c3c"/><rect x="8.4" y="5" width="2.4" height="1" fill="#3c3c3c"/><path d="M6.9 7.2 H12.4 V13.8 Q12.4 14.8 11.4 14.8 H7.9 Q6.9 14.8 6.9 13.8Z" fill="#444"/></svg></div>
<svg class="a" style="left:214px;top:588px" width="8" height="8"><path d="M5.8 1 L5.8 5.8 L1 5.8Z" fill="#888" stroke="#000" stroke-width="1.2" stroke-linejoin="round"/></svg>
<svg class="a" style="left:229px;top:581px" width="14" height="17" viewBox="0 0 14 17"><defs><linearGradient id="fg" x1="0" y1="0" x2="1" y2="1"><stop offset="0" stop-color="#fff3a8"/><stop offset="1" stop-color="#e2c04a"/></linearGradient></defs><path d="M1 1.5 Q1 0.5 2 0.5 H12 Q13 0.5 13 1.5 V6 H13.5 V14.5 Q13.5 15.5 12.5 15.5 H7 Q6.5 16.5 5 16.5 Q3.5 16.5 3 15.5 H2 Q1 15.5 1 14.5Z" fill="url(#fg)"/><rect x="6.5" y="1" width="1.3" height="14.5" fill="#d8b440" opacity="0.7"/><rect x="2.5" y="2" width="1.5" height="7" fill="#fffce0" opacity="0.8"/><rect x="11.5" y="8.5" width="1.3" height="5" fill="#fff"/><rect x="11.5" y="11.5" width="1.3" height="2.5" fill="#3aa0d8"/></svg>
<div class="t" style="left:252px;top:583px;color:#b3b3b3;letter-spacing:-0.462px">GARTEN_Stromsensor</div>
<div class="btn" style="left:1658px;top:581px"><svg width="20" height="20"><rect x="6" y="5.6" width="7.2" height="1.6" fill="#3c3c3c"/><rect x="8.4" y="5" width="2.4" height="1" fill="#3c3c3c"/><path d="M6.9 7.2 H12.4 V13.8 Q12.4 14.8 11.4 14.8 H7.9 Q6.9 14.8 6.9 13.8Z" fill="#444"/></svg></div>
<svg class="a" style="left:238px;top:606px" width="14" height="17" viewBox="0 0 14 17"><path d="M1.5 1.5 H9 L12.5 5 V15.5 H1.5Z" fill="#fafafa" stroke="#8a8a8a" stroke-width="1"/><path d="M9 1.5 V5 H12.5" fill="#e0e0e0" stroke="#9a9a9a" stroke-width="0.8"/></svg>
<div class="t" style="left:261px;top:608px;color:#111;letter-spacing:-0.06px">Current</div>
<svg class="a" style="left:533px;top:608px" width="14" height="13" viewBox="0 0 14 13"><rect x="1" y="0.8" width="12" height="11.5" rx="1.5" fill="none" stroke="#9ab6c2" stroke-width="1.1"/><circle cx="7" cy="6.5" r="2.8" fill="none" stroke="#9ab6c2" stroke-width="1.1"/></svg>
<div class="t" style="left:554px;top:608px;letter-spacing:-0.477px">/ESP_Easy_1/GARTEN_Stromsensor/Current</div>
<div class="t" style="left:866px;top:608px;letter-spacing:-0.297px">state</div>
<div class="t" style="left:967px;top:608px;letter-spacing:0.067px">variable</div>
<div class="t" style="left:1469px;top:608px;color:#0f9a0f;letter-spacing:-0.353px">1.2533</div>
<div class="btn" style="left:1637px;top:606px"><svg width="20" height="20"><path d="M5 15 L5.6 12.8 L11.2 7.2 L12.8 8.8 L7.2 14.4Z" fill="#3c3c3c"/><path d="M11.8 6.6 L12.9 5.5 L14.5 7.1 L13.4 8.2Z" fill="#3c3c3c"/></svg></div>
<div class="btn" style="left:1658px;top:606px"><svg width="20" height="20"><rect x="6" y="5.6" width="7.2" height="1.6" fill="#3c3c3c"/><rect x="8.4" y="5" width="2.4" height="1" fill="#3c3c3c"/><path d="M6.9 7.2 H12.4 V13.8 Q12.4 14.8 11.4 14.8 H7.9 Q6.9 14.8 6.9 13.8Z" fill="#444"/></svg></div>
<div class="btn" style="left:1679px;top:606px;background:#64b5f6"><svg width="20" height="20"><g transform="translate(3 4.2) scale(0.49)"><path fill="#444" d="M22.7 19l-9.1-9.1c.9-2.3.4-5-1.5-6.9-2-2-5-2.4-7.4-1.3L9 6 6 9 1.6 4.7C.4 7.1.9 10.1 2.9 12.1c1.9 1.9 4.6 2.4 6.9 1.5l9.1 9.1c.4.4 1 .4 1.4 0l2.3-2.3c.5-.4.5-1.1.1-1.4z"/></g></svg></div>
<svg class="a" style="left:238px;top:631px" width="14" height="17" viewBox="0 0 14 17"><path d="M1.5 1.5 H9 L12.5 5 V15.5 H1.5Z" fill="#fafafa" stroke="#8a8a8a" stroke-width="1"/><path d="M9 1.5 V5 H12.5" fill="#e0e0e0" stroke="#9a9a9a" stroke-width="0.8"/></svg>
<div class="t" style="left:261px;top:633px;color:#111;letter-spacing:-0.438px">Powe0</div>
<svg class="a" style="left:533px;top:633px" width="14" height="13" viewBox="0 0 14 13"><rect x="1" y="0.8" width="12" height="11.5" rx="1.5" fill="none" stroke="#9ab6c2" stroke-width="1.1"/><circle cx="7" cy="6.5" r="2.8" fill="none" stroke="#9ab6c2" stroke-width="1.1"/></svg>
<div class="t" style="left:554px;top:633px;letter-spacing:-0.544px">/ESP_Easy_1/GARTEN_Stromsensor/Powe0</div>
<div class="t" style="left:866px;top:633px;letter-spacing:-0.297px">state</div>
<div class="t" style="left:967px;top:633px;letter-spacing:0.067px">variable</div>
<div class="t" style="left:1469px;top:633px;color:#111;letter-spacing:-0.699px">,$/ES</div>
<div class="btn" style="left:1637px;top:631px"><svg width="20" height="20"><path d="M5 15 L5.6 12.8 L11.2 7.2 L12.8 8.8 L7.2 14.4Z" fill="#3c3c3c"/><path d="M11.8 6.6 L12.9 5.5 L14.5 7.1 L13.4 8.2Z" fill="#3c3c3c"/></svg></div>
<div class="btn" style="left:1658px;top:631px"><svg width="20" height="20"><rect x="6" y="5.6" width="7.2" height="1.6" fill="#3c3c3c"/><rect x="8.4" y="5" width="2.4" height="1" fill="#3c3c3c"/><path d="M6.9 7.2 H12.4 V13.8 Q12.4 14.8 11.4 14.8 H7.9 Q6.9 14.8 6.9 13.8Z" fill="#444"/></svg></div>
<div class="btn" style="left:1679px;top:631px"><svg width="20" height="20"><g transform="translate(3 4.2) scale(0.49)"><path fill="#3c3c3c" d="M22.7 19l-9.1-9.1c.9-2.3.4-5-1.5-6.9-2-2-5-2.4-7.4-1.3L9 6 6 9 1.6 4.7C.4 7.1.9 10.1 2.9 12.1c1.9 1.9 4.6 2.4 6.9 1.5l9.1 9.1c.4.4 1 .4 1.4 0l2.3-2.3c.5-.4.5-1.1.1-1.4z"/></g></svg></div>
<svg class="a" style="left:238px;top:656px" width="14" height="17" viewBox="0 0 14 17"><path d="M1.5 1.5 H9 L12.5 5 V15.5 H1.5Z" fill="#fafafa" stroke="#8a8a8a" stroke-width="1"/><path d="M9 1.5 V5 H12.5" fill="#e0e0e0" stroke="#9a9a9a" stroke-width="0.8"/></svg>
<div class="t" style="left:261px;top:658px;color:#111;letter-spacing:-0.215px">Power</div>
<svg class="a" style="left:533px;top:658px" width="14" height="13" viewBox="0 0 14 13"><rect x="1" y="0.8" width="12" height="11.5" rx="1.5" fill="none" stroke="#9ab6c2" stroke-width="1.1"/><circle cx="7" cy="6.5" r="2.8" fill="none" stroke="#9ab6c2" stroke-width="1.1"/></svg>
<div class="t" style="left:554px;top:658px;letter-spacing:-0.519px">/ESP_Easy_1/GARTEN_Stromsensor/Power</div>
<div class="t" style="left:866px;top:658px;letter-spacing:-0.297px">state</div>
<div class="t" style="left:967px;top:658px;letter-spacing:0.067px">variable</div>
<div class="t" style="left:1469px;top:658px;color:#0f9a0f;letter-spacing:-0.387px">14.63</div>
<div class="btn" style="left:1637px;top:656px"><svg width="20" height="20"><path d="M5 15 L5.6 12.8 L11.2 7.2 L12.8 8.8 L7.2 14.4Z" fill="#3c3c3c"/><path d="M11.8 6.6 L12.9 5.5 L14.5 7.1 L13.4 8.2Z" fill="#3c3c3c"/></svg></div>
<div class="btn" style="left:1658px;top:656px"><svg width="20" height="20"><rect x="6" y="5.6" width="7.2" height="1.6" fill="#3c3c3c"/><rect x="8.4" y="5" width="2.4" height="1" fill="#3c3c3c"/><path d="M6.9 7.2 H12.4 V13.8 Q12.4 14.8 11.4 14.8 H7.9 Q6.9 14.8 6.9 13.8Z" fill="#444"/></svg></div>
<div class="btn" style="left:1679px;top:656px"><svg width="20" height="20"><g transform="translate(3 4.2) scale(0.49)"><path fill="#3c3c3c" d="M22.7 19l-9.1-9.1c.9-2.3.4-5-1.5-6.9-2-2-5-2.4-7.4-1.3L9 6 6 9 1.6 4.7C.4 7.1.9 10.1 2.9 12.1c1.9 1.9 4.6 2.4 6.9 1.5l9.1 9.1c.4.4 1 .4 1.4 0l2.3-2.3c.5-.4.5-1.1.1-1.4z"/></g></svg></div>
<svg class="a" style="left:238px;top:681px" width="14" height="17" viewBox="0 0 14 17"><path d="M1.5 1.5 H9 L12.5 5 V15.5 H1.5Z" fill="#fafafa" stroke="#8a8a8a" stroke-width="1"/><path d="M9 1.5 V5 H12.5" fill="#e0e0e0" stroke="#9a9a9a" stroke-width="0.8"/></svg>
<div class="t" style="left:261px;top:683px;color:#111;letter-spacing:0.271px">Voltage</div>
<svg class="a" style="left:533px;top:683px" width="14" height="13" viewBox="0 0 14 13"><rect x="1" y="0.8" width="12" height="11.5" rx="1.5" fill="none" stroke="#9ab6c2" stroke-width="1.1"/><circle cx="7" cy="6.5" r="2.8" fill="none" stroke="#9ab6c2" stroke-width="1.1"/></svg>
<div class="t" style="left:554px;top:683px;letter-spacing:-0.424px">/ESP_Easy_1/GARTEN_Stromsensor/Voltage</div>
<div class="t" style="left:866px;top:683px;letter-spacing:-0.297px">state</div>
<div class="t" style="left:967px;top:683px;letter-spacing:0.067px">variable</div>
<div class="t" style="left:1469px;top:683px;color:#0f9a0f;letter-spacing:-0.181px">11.67545</div>
<div class="btn" style="left:1637px;top:681px"><svg width="20" height="20"><path d="M5 15 L5.6 12.8 L11.2 7.2 L12.8 8.8 L7.2 14.4Z" fill="#3c3c3c"/><path d="M11.8 6.6 L12.9 5.5 L14.5 7.1 L13.4 8.2Z" fill="#3c3c3c"/></svg></div>
<div class="btn" style="left:1658px;top:681px"><svg width="20" height="20"><rect x="6" y="5.6" width="7.2" height="1.6" fill="#3c3c3c"/><rect x="8.4" y="5" width="2.4" height="1" fill="#3c3c3c"/><path d="M6.9 7.2 H12.4 V13.8 Q12.4 14.8 11.4 14.8 H7.9 Q6.9 14.8 6.9 13.8Z" fill="#444"/></svg></div>
<div class="btn" style="left:1679px;top:681px;background:#64b5f6"><svg width="20" height="20"><g transform="translate(3 4.2) scale(0.49)"><path fill="#444" d="M22.7 19l-9.1-9.1c.9-2.3.4-5-1.5-6.9-2-2-5-2.4-7.4-1.3L9 6 6 9 1.6 4.7C.4 7.1.9 10.1 2.9 12.1c1.9 1.9 4.6 2.4 6.9 1.5l9.1 9.1c.4.4 1 .4 1.4 0l2.3-2.3c.5-.4.5-1.1.1-1.4z"/></g></svg></div>
<div class="btn" style="left:1264px;top:680px;width:32px"><svg width="32" height="20"><path d="M12 14.8 L12.4 13.2 L17 8.6 L18.2 9.8 L13.6 14.4Z" fill="#666"/></svg></div>
<svg class="a" style="left:214px;top:711px" width="8" height="11"><path d="M1.5 1.2 L5.5 5.3 L1.5 9.4Z" fill="#fff" stroke="#808080" stroke-width="1"/></svg>
<svg class="a" style="left:229px;top:706px" width="14" height="17" viewBox="0 0 14 17"><defs><linearGradient id="fg" x1="0" y1="0" x2="1" y2="1"><stop offset="0" stop-color="#fff3a8"/><stop offset="1" stop-color="#e2c04a"/></linearGradient></defs><path d="M1 1.5 Q1 0.5 2 0.5 H12 Q13 0.5 13 1.5 V6 H13.5 V14.5 Q13.5 15.5 12.5 15.5 H7 Q6.5 16.5 5 16.5 Q3.5 16.5 3 15.5 H2 Q1 15.5 1 14.5Z" fill="url(#fg)"/><rect x="6.5" y="1" width="1.3" height="14.5" fill="#d8b440" opacity="0.7"/><rect x="2.5" y="2" width="1.5" height="7" fill="#fffce0" opacity="0.8"/><rect x="11.5" y="8.5" width="1.3" height="5" fill="#fff"/><rect x="11.5" y="11.5" width="1.3" height="2.5" fill="#3aa0d8"/></svg>
<div class="t" style="left:252px;top:708px;color:#b3b3b3;letter-spacing:0.25px">Temperatur</div>
<div class="btn" style="left:1658px;top:706px"><svg width="20" height="20"><rect x="6" y="5.6" width="7.2" height="1.6" fill="#3c3c3c"/><rect x="8.4" y="5" width="2.4" height="1" fill="#3c3c3c"/><path d="M6.9 7.2 H12.4 V13.8 Q12.4 14.8 11.4 14.8 H7.9 Q6.9 14.8 6.9 13.8Z" fill="#444"/></svg></div>
<svg class="a" style="left:214px;top:736px" width="8" height="11"><path d="M1.5 1.2 L5.5 5.3 L1.5 9.4Z" fill="#fff" stroke="#808080" stroke-width="1"/></svg>
<svg class="a" style="left:229px;top:731px" width="14" height="17" viewBox="0 0 14 17"><defs><linearGradient id="fg" x1="0" y1="0" x2="1" y2="1"><stop offset="0" stop-color="#fff3a8"/><stop offset="1" stop-color="#e2c04a"/></linearGradient></defs><path d="M1 1.5 Q1 0.5 2 0.5 H12 Q13 0.5 13 1.5 V6 H13.5 V14.5 Q13.5 15.5 12.5 15.5 H7 Q6.5 16.5 5 16.5 Q3.5 16.5 3 15.5 H2 Q1 15.5 1 14.5Z" fill="url(#fg)"/><rect x="6.5" y="1" width="1.3" height="14.5" fill="#d8b440" opacity="0.7"/><rect x="2.5" y="2" width="1.5" height="7" fill="#fffce0" opacity="0.8"/><rect x="11.5" y="8.5" width="1.3" height="5" fill="#fff"/><rect x="11.5" y="11.5" width="1.3" height="2.5" fill="#3aa0d8"/></svg>
<div class="t" style="left:252px;top:733px;color:#b3b3b3;letter-spacing:-0.537px">status</div>
<div class="btn" style="left:1658px;top:731px"><svg width="20" height="20"><rect x="6" y="5.6" width="7.2" height="1.6" fill="#3c3c3c"/><rect x="8.4" y="5" width="2.4" height="1" fill="#3c3c3c"/><path d="M6.9 7.2 H12.4 V13.8 Q12.4 14.8 11.4 14.8 H7.9 Q6.9 14.8 6.9 13.8Z" fill="#444"/></svg></div>
<svg class="a" style="left:205px;top:761px" width="8" height="11"><path d="M1.5 1.2 L5.5 5.3 L1.5 9.4Z" fill="#fff" stroke="#808080" stroke-width="1"/></svg>
<svg class="a" style="left:220px;top:756px" width="14" height="17" viewBox="0 0 14 17"><defs><linearGradient id="fg" x1="0" y1="0" x2="1" y2="1"><stop offset="0" stop-color="#fff3a8"/><stop offset="1" stop-color="#e2c04a"/></linearGradient></defs><path d="M1 1.5 Q1 0.5 2 0.5 H12 Q13 0.5 13 1.5 V6 H13.5 V14.5 Q13.5 15.5 12.5 15.5 H7 Q6.5 16.5 5 16.5 Q3.5 16.5 3 15.5 H2 Q1 15.5 1 14.5Z" fill="url(#fg)"/><rect x="6.5" y="1" width="1.3" height="14.5" fill="#d8b440" opacity="0.7"/><rect x="2.5" y="2" width="1.5" height="7" fill="#fffce0" opacity="0.8"/><rect x="11.5" y="8.5" width="1.3" height="5" fill="#fff"/><rect x="11.5" y="11.5" width="1.3" height="2.5" fill="#3aa0d8"/></svg>
<div class="t" style="left:243px;top:758px;color:#b3b3b3;letter-spacing:0.344px">info</div>
<svg class="a" style="left:533px;top:758px" width="15" height="15" viewBox="0 0 15 15"><rect x="1.4" y="1" width="12" height="11.8" rx="2" fill="none" stroke="#8aa8b8" stroke-width="1.1"/><rect x="6.8" y="3" width="1.2" height="1.2" fill="#8aa8b8"/><rect x="6.6" y="5.5" width="1.6" height="2" fill="#3a7a9a"/><rect x="6.6" y="9" width="1.6" height="1.4" fill="#3a7a9a"/></svg>
<div class="t" style="left:554px;top:758px;letter-spacing:0.295px">Information</div>
<div class="t" style="left:866px;top:758px;letter-spacing:-0.258px">channel</div>
<div class="btn" style="left:1637px;top:756px"><svg width="20" height="20"><path d="M5 15 L5.6 12.8 L11.2 7.2 L12.8 8.8 L7.2 14.4Z" fill="#3c3c3c"/><path d="M11.8 6.6 L12.9 5.5 L14.5 7.1 L13.4 8.2Z" fill="#3c3c3c"/></svg></div>
<div class="btn" style="left:1658px;top:756px"><svg width="20" height="20"><rect x="6" y="5.6" width="7.2" height="1.6" fill="#3c3c3c"/><rect x="8.4" y="5" width="2.4" height="1" fill="#3c3c3c"/><path d="M6.9 7.2 H12.4 V13.8 Q12.4 14.8 11.4 14.8 H7.9 Q6.9 14.8 6.9 13.8Z" fill="#444"/></svg></div>
<svg class="a" style="left:196px;top:786px" width="8" height="11"><path d="M1.5 1.2 L5.5 5.3 L1.5 9.4Z" fill="#fff" stroke="#808080" stroke-width="1"/></svg>
<svg class="a" style="left:211px;top:781px" width="14" height="17" viewBox="0 0 14 17"><defs><linearGradient id="fg" x1="0" y1="0" x2="1" y2="1"><stop offset="0" stop-color="#fff3a8"/><stop offset="1" stop-color="#e2c04a"/></linearGradient></defs><path d="M1 1.5 Q1 0.5 2 0.5 H12 Q13 0.5 13 1.5 V6 H13.5 V14.5 Q13.5 15.5 12.5 15.5 H7 Q6.5 16.5 5 16.5 Q3.5 16.5 3 15.5 H2 Q1 15.5 1 14.5Z" fill="url(#fg)"/><rect x="6.5" y="1" width="1.3" height="14.5" fill="#d8b440" opacity="0.7"/><rect x="2.5" y="2" width="1.5" height="7" fill="#fffce0" opacity="0.8"/><rect x="11.5" y="8.5" width="1.3" height="5" fill="#fff"/><rect x="11.5" y="11.5" width="1.3" height="2.5" fill="#3aa0d8"/></svg>
<div class="t" style="left:234px;top:783px;color:#b3b3b3;letter-spacing:-0.684px">vis.0</div>
<svg class="a" style="left:530px;top:782px" width="20" height="17" viewBox="0 0 20 17"><path d="M2.9 15 A8.8 8.8 0 1 1 17.1 15 Z" fill="none" stroke="#4aa3e6" stroke-width="1"/><path d="M4.9 13.3 A6.3 6.3 0 1 1 15.1 13.3" fill="none" stroke="#4aa3e6" stroke-width="0.8"/><path d="M7 6.3 L11.8 10.6 Q12.3 12.3 10.6 11.8Z" fill="none" stroke="#3a9ae0" stroke-width="1"/></svg>
<div class="t" style="left:554px;top:783px;letter-spacing:-0.04px">user files and images for vis</div>
<div class="t" style="left:866px;top:783px;letter-spacing:0.031px">meta</div>
<div class="btn" style="left:1637px;top:781px"><svg width="20" height="20"><path d="M5 15 L5.6 12.8 L11.2 7.2 L12.8 8.8 L7.2 14.4Z" fill="#3c3c3c"/><path d="M11.8 6.6 L12.9 5.5 L14.5 7.1 L13.4 8.2Z" fill="#3c3c3c"/></svg></div>
<div class="btn" style="left:1658px;top:781px"><svg width="20" height="20"><rect x="6" y="5.6" width="7.2" height="1.6" fill="#3c3c3c"/><rect x="8.4" y="5" width="2.4" height="1" fill="#3c3c3c"/><path d="M6.9 7.2 H12.4 V13.8 Q12.4 14.8 11.4 14.8 H7.9 Q6.9 14.8 6.9 13.8Z" fill="#444"/></svg></div>
<svg class="a" style="left:0;top:0" width="1891" height="835"><rect x="1441" y="303" width="117" height="26" rx="11" fill="none" stroke="#000" stroke-width="4.6"/><rect x="1429" y="585.5" width="117.5" height="41.5" rx="10" fill="none" stroke="#000" stroke-width="4.6"/><path d="M1462 612 L1418 316" stroke="#000" stroke-width="4.6"/><path d="M1405 328 L1418 313 L1431 323" fill="none" stroke="#000" stroke-width="4.6"/></svg>
</body></html>
